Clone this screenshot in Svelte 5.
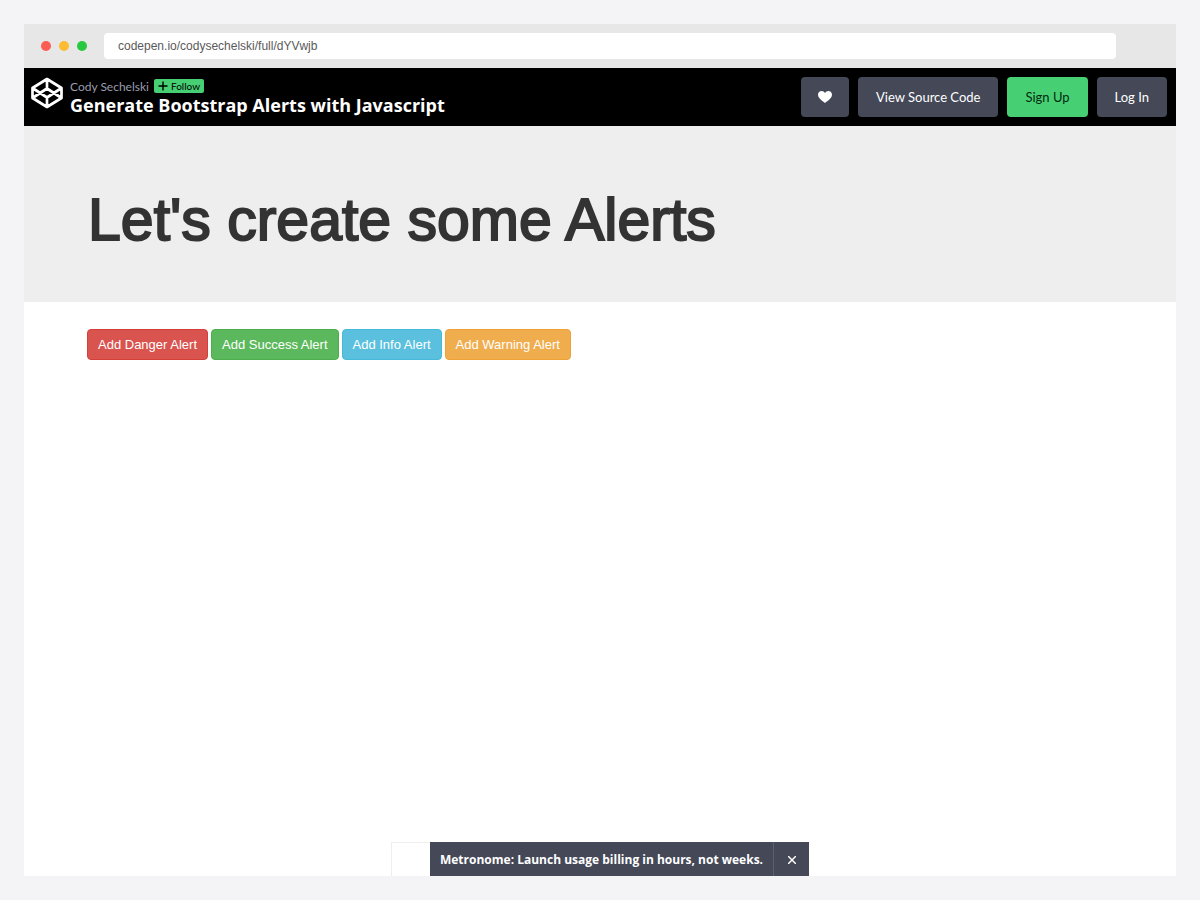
<script lang="ts">
	type AlertType = 'danger' | 'success' | 'info' | 'warning';

	const types: AlertType[] = ['danger', 'success', 'info', 'warning'];

	let url = $state('codepen.io/codysechelski/full/dYVwjb');
	let alerts = $state<{ id: number; type: AlertType }[]>([]);
	let nextId = 0;
	let showAd = $state(true);

	function label(type: AlertType) {
		return type[0].toUpperCase() + type.slice(1);
	}

	function addAlert(type: AlertType) {
		alerts.push({ id: nextId++, type });
	}

	function dismiss(id: number) {
		alerts = alerts.filter((a) => a.id !== id);
	}
</script>

<div class="desktop">
	<div class="window">
		<div class="toolbar">
			<div class="dots">
				<span class="dot red"></span>
				<span class="dot yellow"></span>
				<span class="dot green"></span>
			</div>
			<input class="url" type="text" aria-label="Address" bind:value={url} />
		</div>

		<header class="pen-header">
			<a class="logo" href="#home" aria-label="CodePen">
				<svg viewBox="0 0 32 32" width="32" height="32">
					<path
						d="M16 2 30.500 11V21L16 30 1.500 21V11ZM16 2V11.500M16 20.500V30M1.500 11 16 20.500 30.500 11M1.500 21 16 11.500 30.500 21"
						fill="none"
						stroke="#fff"
						stroke-width="2.700"
						stroke-linejoin="round"
					/>
				</svg>
			</a>
			<div class="pen-info">
				<div class="byline">
					<a class="author" href="#author">Cody Sechelski</a>
					<button class="follow">
						<svg viewBox="0 0 10 10" width="10" height="10">
							<path d="M5 .5V9.500M.5 5H9.500" stroke="#000" stroke-width="1.400" />
						</svg>
						Follow
					</button>
				</div>
				<h1 class="pen-title">Generate Bootstrap Alerts with Javascript</h1>
			</div>
			<nav class="actions">
				<button class="action love" aria-label="Love this pen">
					<svg viewBox="0 0 14 12" width="14" height="12">
						<path
							d="M7 12C6 11 0 7.500 0 3.700C0 1.400 1.600 0 3.600 0C5.200 0 6.300 .8 7 2C7.700 .8 8.800 0 10.400 0C12.400 0 14 1.400 14 3.700C14 7.500 8 11 7 12Z"
							fill="#fff"
						/>
					</svg>
				</button>
				<a class="action" href="#source">View Source Code</a>
				<a class="action primary" href="#signup">Sign Up</a>
				<a class="action" href="#login">Log In</a>
			</nav>
		</header>

		<div class="jumbotron">
			<h2>Let's create some Alerts</h2>
		</div>

		<main class="content">
			<div class="buttons">
				{#each types as type}
					<button class="btn {type}" onclick={() => addAlert(type)}>Add {label(type)} Alert</button>
				{/each}
			</div>
			{#each alerts as alert (alert.id)}
				<div class="alert {alert.type}" role="alert">
					{label(alert.type)} alert
					<button class="dismiss" aria-label="Dismiss" onclick={() => dismiss(alert.id)}>×</button>
				</div>
			{/each}
		</main>

		{#if showAd}
			<aside class="ad">
				<div class="ad-image"></div>
				<a class="ad-text" href="#metronome">Metronome: Launch usage billing in hours, not weeks.</a>
				<button class="ad-close" aria-label="Close" onclick={() => (showAd = false)}>
					<svg viewBox="0 0 8 8" width="8" height="8">
						<path d="M0 0 8 8M8 0 0 8" stroke="#fff" stroke-width="1.500" />
					</svg>
				</button>
			</aside>
		{/if}
	</div>
</div>

<style>
	:global(body) {
		background: #f4f4f7;
	}

	a {
		text-decoration: none;
	}

	button {
		border: 0;
		cursor: pointer;
	}

	.desktop {
		box-sizing: border-box;
		min-height: 100vh;
		padding: 24px;
		display: flex;
		font-family: 'Liberation Sans', Arial, sans-serif;
	}

	.window {
		flex: 1;
		display: flex;
		flex-direction: column;
		background: #fff;
	}

	.toolbar {
		display: flex;
		align-items: center;
		gap: 17px;
		height: 44px;
		padding: 0 60px 0 17px;
		background: #e7e7e7;
	}

	.dots {
		display: flex;
		gap: 8px;
	}

	.dot {
		width: 10px;
		height: 10px;
		border-radius: 50%;
	}

	.red {
		background: #fc5c54;
	}

	.yellow {
		background: #fdbc32;
	}

	.green {
		background: #28c840;
	}

	.url {
		flex: 1;
		box-sizing: border-box;
		height: 26px;
		padding: 0 14px;
		border: 0;
		border-radius: 4px;
		background: #fff;
		color: #5a5a5a;
		font: 12px 'Liberation Sans', Arial, sans-serif;
	}

	.pen-header {
		display: flex;
		align-items: center;
		height: 58px;
		padding: 0 9px 0 7px;
		background: #000;
		font-family: Lato, sans-serif;
	}

	.logo {
		height: 32px;
		margin: 0 7px 8px 0;
	}

	.byline {
		display: flex;
		align-items: center;
		gap: 5px;
		height: 16px;
	}

	.author {
		color: #9b9dad;
		font-size: 12px;
	}

	.follow {
		display: flex;
		align-items: center;
		gap: 3px;
		height: 14px;
		padding: 0 4px;
		border-radius: 2px;
		background: #47cf73;
		color: #000;
		font: 10px Lato, sans-serif;
	}

	.pen-title {
		margin: 0;
		color: #fff;
		font: 700 18px/22px 'Open Sans', sans-serif;
	}

	.actions {
		display: flex;
		gap: 9px;
		margin-left: auto;
	}

	.action {
		display: flex;
		align-items: center;
		height: 40px;
		padding: 0 18px;
		border-radius: 4px;
		background: #444857;
		color: #fff;
		font-size: 13px;
	}

	.action.love {
		padding: 0 17px;
	}

	.action.primary {
		background: #47cf73;
		color: #042c10;
	}

	.jumbotron {
		padding: 66px 64px 54px;
		background: #eee;
	}

	.jumbotron h2 {
		margin: 0;
		color: #333;
		font: 59px/56px 'Liberation Sans', Arial, sans-serif;
		-webkit-text-stroke: 2px #333;
	}

	.content {
		flex: 1;
		padding: 27px 63px;
	}

	.buttons {
		display: flex;
		flex-wrap: wrap;
		gap: 3px;
	}

	.btn {
		height: 31px;
		padding: 0 10px;
		border: 1px solid;
		border-radius: 4px;
		color: #fff;
		font: 13px 'Liberation Sans', Arial, sans-serif;
	}

	.btn.danger {
		background: #d9534f;
		border-color: #d43f3a;
	}

	.btn.success {
		background: #5cb85c;
		border-color: #4cae4c;
	}

	.btn.info {
		background: #5bc0de;
		border-color: #46b8da;
	}

	.btn.warning {
		background: #f0ad4e;
		border-color: #eea236;
	}

	.alert {
		display: flex;
		justify-content: space-between;
		margin-top: 16px;
		padding: 14px;
		border-radius: 4px;
		font-size: 13px;
	}

	.alert.danger {
		background: #f2dede;
		color: #a94442;
	}

	.alert.success {
		background: #dff0d8;
		color: #3c763d;
	}

	.alert.info {
		background: #d9edf7;
		color: #31708f;
	}

	.alert.warning {
		background: #fcf8e3;
		color: #8a6d3b;
	}

	.dismiss {
		background: none;
		color: inherit;
	}

	.ad {
		display: flex;
		align-self: center;
		height: 34px;
		background: #444857;
	}

	.ad-image {
		width: 38px;
		border: 1px solid #eee;
		border-width: 1px 0 0 1px;
		background: #fff;
	}

	.ad-text {
		display: flex;
		align-items: center;
		padding: 0 10px;
		color: #fff;
		font: 700 12px 'Open Sans', sans-serif;
	}

	.ad-close {
		width: 36px;
		border-left: 1px solid #5a5f73;
		background: none;
	}
</style>
